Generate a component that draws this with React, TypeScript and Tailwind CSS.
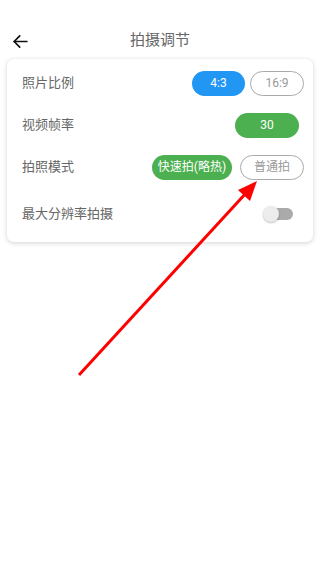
import React from "react";

const font = { fontFamily: '"Roboto", "Noto Sans CJK SC", sans-serif' };

export default function App() {
  return (
    <div className="relative w-[320px] h-[569px] bg-white overflow-hidden" style={font}>
      <div className="pt-[20px]">
        <div className="relative h-[39px] flex items-center justify-center pt-[2px]">
          <svg className="absolute left-[11px] top-[12px]" width="19" height="19" viewBox="0 0 24 24" fill="none" stroke="#111" strokeWidth="2.2" strokeLinecap="round" strokeLinejoin="round">
            <path d="M20 12H4" />
            <path d="M11 5l-7 7 7 7" />
          </svg>
          <span className="text-[15px] text-[#666]">拍摄调节</span>
        </div>
        <div className="mx-[7px] rounded-[7px] bg-white shadow-[0_1px_5px_rgba(0,0,0,0.18)] pt-[3px] pb-[2px] pl-[15px] pr-[9px]">
          <div className="h-[42px] flex items-center justify-between">
            <span className="text-[13px] text-[#666]">照片比例</span>
            <div className="flex gap-[5px]">
              <div className="w-[53px] h-[25px] rounded-full bg-[#2196f3] text-white text-[12px] flex items-center justify-center">4:3</div>
              <div className="w-[54px] h-[25px] rounded-full border border-[#aaa] text-[#999] text-[12px] flex items-center justify-center">16:9</div>
            </div>
          </div>
          <div className="h-[42px] flex items-center justify-between">
            <span className="text-[13px] text-[#666]">视频帧率</span>
            <div className="w-[64px] h-[25px] mr-[5px] rounded-full bg-[#4caf50] text-white text-[12px] flex items-center justify-center">30</div>
          </div>
          <div className="h-[42px] flex items-center justify-between">
            <span className="text-[13px] text-[#666]">拍照模式</span>
            <div className="flex gap-[8px]">
              <div className="w-[80px] h-[25px] rounded-full bg-[#4caf50] text-white text-[12px] flex items-center justify-center">快速拍(略热)</div>
              <div className="w-[64px] h-[25px] rounded-full border border-[#aaa] text-[#999] text-[12px] flex items-center justify-center">普通拍</div>
            </div>
          </div>
          <div className="h-[52px] flex items-center justify-between">
            <span className="text-[13px] text-[#666]">最大分辨率拍摄</span>
            <div className="relative w-[30px] h-[16px] mr-[11px] flex items-center">
              <div className="absolute left-[4px] right-0 h-[12px] rounded-full bg-[#aaa]" />
              <div className="absolute left-0 w-[16px] h-[16px] rounded-full bg-[#ececec] shadow-[0_1px_2px_rgba(0,0,0,0.25)]" />
            </div>
          </div>
        </div>
      </div>
      <svg className="absolute left-0 top-0 pointer-events-none" width="320" height="569" viewBox="0 0 320 569">
        <line x1="79" y1="375" x2="247" y2="192" stroke="#ff0000" strokeWidth="3" />
        <polygon points="257,181 238,190 250,201" fill="#ff0000" />
      </svg>
    </div>
  );
}
